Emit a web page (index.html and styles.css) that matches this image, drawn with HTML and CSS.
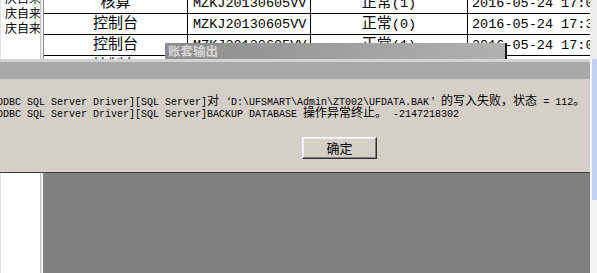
FILE: index.html
```html
<!DOCTYPE html>
<html lang="zh-CN">
<head>
<meta charset="utf-8">
<title>账套输出</title>
<link rel="stylesheet" href="styles.css">
</head>
<body>
<div class="screen">
  <aside class="list">
    <div class="list-rows">
      <div class="list-row">庆自来</div>
      <div class="list-row">庆自来</div>
      <div class="list-row">庆自来</div>
    </div>
  </aside>
  <div class="splitter"></div>
  <main class="main">
    <div class="grid">
      <div class="c mid"><span class="k">核算</span></div>
      <div class="c left">MZKJ20130605VV</div>
      <div class="c mid"><span class="k">正常</span>(1)</div>
      <div class="c date">2016-05-24 17:05:12</div>

      <div class="c mid"><span class="k">控制台</span></div>
      <div class="c left">MZKJ20130605VV</div>
      <div class="c mid"><span class="k">正常</span>(0)</div>
      <div class="c date">2016-05-24 17:30:41</div>

      <div class="c mid"><span class="k">控制台</span></div>
      <div class="c left">MZKJ20130605VV</div>
      <div class="c mid"><span class="k">正常</span>(1)</div>
      <div class="c date">2016-05-24 17:05:12</div>

      <div class="c mid"><span class="k">控制台</span></div>
      <div class="c left">MZKJ20130605VV</div>
      <div class="c mid"><span class="k">正常</span>(1)</div>
      <div class="c date">2016-05-24 17:05:12</div>
    </div>
  </main>
  <div class="edge">
    <div class="edge-top"></div>
    <div class="edge-blue"></div>
    <div class="edge-rest"></div>
  </div>

  <section class="dialog">
    <div class="dlg-band"></div>
    <div class="dlg-body">
      <div class="msg">
        <div class="ln">ODBC SQL Server Driver][SQL Server]<span class="z">对</span><span class="q open">‘</span>D:\UFSMART\Admin\ZT002\UFDATA.BAK<span class="q close">’</span><span class="z">的写入失败，状态</span> = 112<span class="z">。</span></div>
        <div class="ln">ODBC SQL Server Driver][SQL Server]BACKUP DATABASE <span class="z">操作异常终止。</span> -2147218302</div>
      </div>
      <button class="btn" type="button">确定</button>
    </div>
  </section>

  <div class="titlebar">账套输出</div>
</div>
</body>
</html>
```

FILE: styles.css
```css
html, body {
  margin: 0;
  padding: 0;
  background: #ffffff;
}

.screen {
  position: relative;
  width: 597px;
  height: 273px;
  overflow: hidden;
  display: flex;
  font-family: "Liberation Mono", "Noto Sans CJK SC", monospace;
}

/* left list */
.list {
  width: 40px;
  flex: none;
  background: #ffffff;
  border-left: 1px solid #e2e2e2;
  box-sizing: border-box;
  overflow: hidden;
}
.list-rows {
  margin-top: -10px;
}
.list-row {
  height: 15px;
  line-height: 15px;
  padding-left: 4px;
  font-family: "Noto Sans CJK SC", sans-serif;
  font-size: 12px;
  color: #000;
  white-space: nowrap;
}

.splitter {
  width: 4px;
  flex: none;
  background: linear-gradient(to right, #c2c2c2 0 1px, #f0f0f0 1px 3px, #8a8a8a 3px 4px);
}

/* main area with table */
.main {
  width: 546px;
  flex: none;
  background: #808080;
  display: flex;
  flex-direction: column;
}
.grid {
  margin-top: -7px;
  display: grid;
  grid-template-columns: 144px 123px 157px 122px;
  grid-auto-rows: 21px;
  background: #ffffff;
}
.c {
  box-sizing: border-box;
  border-right: 1px solid #000;
  border-bottom: 1px solid #000;
  height: 21px;
  line-height: 21px;
  font-size: 13.5px;
  color: #000;
  white-space: nowrap;
  overflow: hidden;
}
.c:nth-child(4n) {
  border-right: none;
}
.mid { text-align: center; }
.left { padding-left: 5px; }
.date { padding-left: 4px; }
.k {
  font-family: "Noto Sans CJK SC", sans-serif;
  font-size: 15px;
  line-height: 1;
}

/* right edge */
.edge {
  width: 7px;
  flex: none;
  display: flex;
  flex-direction: column;
}
.edge-top {
  height: 59px;
  background: #ededed;
}
.edge-blue {
  height: 141px;
  box-sizing: border-box;
  border-left: 2px solid #f4f6fc;
  background: #c3d0f4;
}
.edge-rest {
  flex: 1;
  background: #f3f3f3;
}

/* dialog overlay */
.dialog {
  position: absolute;
  left: 0;
  top: 59px;
  width: 590px;
  display: flex;
  flex-direction: column;
}
.dlg-band {
  height: 20px;
  background: linear-gradient(#d2d2d2 0 3px, #a9a9a9 3px);
}
.dlg-body {
  background: #d4d0c8;
  border-bottom: 1px solid #404040;
  padding-top: 15px;
  box-sizing: content-box;
  height: 78px;
  display: flex;
  flex-direction: column;
  align-items: flex-start;
  overflow: hidden;
}
.msg {
  margin-left: -3px;
  font-size: 10px;
  color: #000;
}
.ln {
  height: 12px;
  line-height: 12px;
  white-space: pre;
}
.z {
  font-family: "Noto Sans CJK SC", sans-serif;
  font-size: 12px;
  line-height: 12px;
}
.q {
  display: inline-block;
  width: 12px;
  font-family: "Liberation Serif", serif;
  font-size: 12px;
  line-height: 12px;
}
.q.open { text-align: right; }
.q.close { text-align: left; padding-left: 2px; width: 10px; }

.btn {
  margin-top: 19px;
  margin-left: 302px;
  width: 75px;
  height: 22px;
  padding: 0;
  background: #d4d0c8;
  border: 1px solid;
  border-color: #ffffff #303030 #303030 #ffffff;
  box-shadow: inset -1px -1px #808080, inset 1px 1px #ececec;
  font-family: "Noto Sans CJK SC", sans-serif;
  font-size: 13px;
  line-height: 20px;
  color: #000;
}

.titlebar {
  position: absolute;
  left: 165px;
  top: 43px;
  width: 342px;
  height: 16px;
  padding-left: 3px;
  box-sizing: border-box;
  background: linear-gradient(to right, #8c8c8c, #a3a3a3 60%, #b0b0b0);
  border-right: 2px solid #151515;
  color: #d8d8d8;
  font-family: "Noto Sans CJK SC", sans-serif;
  font-weight: 700;
  font-size: 12.5px;
  line-height: 16px;
  white-space: nowrap;
}
```
